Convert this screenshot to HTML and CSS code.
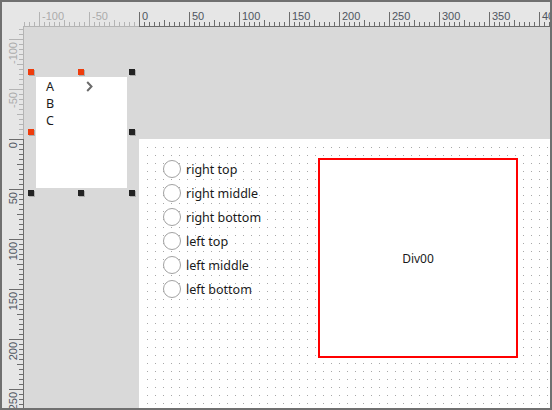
FILE: index.html
```html
<!DOCTYPE html>
<html lang="en">
<head>
  <meta charset="UTF-8" />
  <meta name="viewport" content="width=device-width, initial-scale=1.0" />
  <title>Layout Designer</title>
  <link rel="stylesheet" href="styles.css">
</head>
<body>

  <div class="frame">
    <div class="ruler ruler-top">
      <svg id="ruler-top" width="548" height="25"></svg>
    </div>
    <div class="ruler ruler-left">
      <svg id="ruler-left" width="22" height="381"></svg>
    </div>

    <div class="stage">
      <div class="picker">
        <span class="handle hot h-tl"></span>
        <span class="handle hot h-tm"></span>
        <span class="handle h-tr"></span>
        <span class="handle hot h-ml"></span>
        <span class="handle h-mr"></span>
        <span class="handle h-bl"></span>
        <span class="handle h-bm"></span>
        <span class="handle h-br"></span>
        <div class="picker-panel">
          <ul class="picker-list">
            <li>A</li>
            <li>B</li>
            <li>C</li>
          </ul>
          <svg class="chevron" width="7" height="11" viewBox="0 0 7 11">
            <polyline points="1.2,1 5.5,5.5 1.2,10" fill="none" stroke="#6b6b6b" stroke-width="2" />
          </svg>
        </div>
      </div>

      <div class="canvas">
        <div class="radio-list">
          <label class="radio"><span class="radio-dot"></span>right top</label>
          <label class="radio"><span class="radio-dot"></span>right middle</label>
          <label class="radio"><span class="radio-dot"></span>right bottom</label>
          <label class="radio"><span class="radio-dot"></span>left top</label>
          <label class="radio"><span class="radio-dot"></span>left middle</label>
          <label class="radio"><span class="radio-dot"></span>left bottom</label>
        </div>
        <div class="div-box">Div00</div>
      </div>
    </div>
  </div>

  <script>
    document.addEventListener("DOMContentLoaded", function () {
      // top ruler: page x 139 is zero
      const top = document.getElementById('ruler-top');
      const ox = 137;
      let out = '';
      out += `<line class="base light" x1="21" y1="24.5" x2="${ox}" y2="24.5"/>`;
      out += `<line class="base" x1="${ox}" y1="24.5" x2="548" y2="24.5"/>`;
      for (let v = -115; v <= 410; v += 5) {
        const x = ox + v;
        if (x < 21 || x > 548) continue;
        const len = v % 50 === 0 ? 14 : (v % 25 === 0 ? 6 : 4);
        const cls = v < 0 ? 'tick light' : 'tick';
        out += `<line class="${cls}" x1="${x + 0.5}" y1="${24 - len}" x2="${x + 0.5}" y2="24"/>`;
        if (v % 50 === 0) {
          out += `<text class="${v < 0 ? 'label light' : 'label'}" x="${x + 3}" y="18">${v}</text>`;
        }
      }
      top.innerHTML = out;

      // left ruler: page y 139 is zero
      const left = document.getElementById('ruler-left');
      const oy = 112;
      out = '';
      out += `<line class="base light" x1="21.5" y1="0" x2="21.5" y2="${oy}"/>`;
      out += `<line class="base" x1="21.5" y1="${oy}" x2="21.5" y2="381"/>`;
      for (let v = -110; v <= 270; v += 5) {
        const y = oy + v;
        if (y < 0 || y > 381) continue;
        const len = v % 50 === 0 ? 14 : (v % 25 === 0 ? 6 : 4);
        const cls = v < 0 ? 'tick light' : 'tick';
        out += `<line class="${cls}" x1="${21 - len}" y1="${y + 0.5}" x2="21" y2="${y + 0.5}"/>`;
        if (v % 50 === 0) {
          const ty = y + 3;
          out += `<text class="${v < 0 ? 'label light' : 'label'}" x="15" y="${ty}" text-anchor="end" transform="rotate(-90 15 ${ty})">${v}</text>`;
        }
      }
      left.innerHTML = out;
    });
  </script>

</body>
</html>
```

FILE: styles.css
```css
body {
  margin: 0;
  padding: 0;
  font-family: 'Noto Sans', sans-serif;
  background: #fff;
}

.frame {
  width: 552px;
  height: 410px;
  box-sizing: border-box;
  border: 2px solid #707070;
  display: grid;
  grid-template-columns: 22px 1fr;
  grid-template-rows: 25px 1fr;
  background: #e6e6e6;
  overflow: hidden;
}

.ruler svg {
  display: block;
}

.ruler-top {
  grid-column: 1 / 3;
  grid-row: 1;
}

.ruler-left {
  grid-column: 1;
  grid-row: 2;
}

.ruler .tick,
.ruler .base {
  stroke: #6c6c6c;
  stroke-width: 1;
  shape-rendering: crispEdges;
}

.ruler .tick.light,
.ruler .base.light {
  stroke: #b4b4b4;
}

.ruler .label {
  font-family: 'Liberation Sans', sans-serif;
  font-size: 11px;
  fill: #4f5560;
}

.ruler .label.light {
  fill: #ababab;
}

.stage {
  grid-column: 2;
  grid-row: 2;
  position: relative;
  overflow: hidden;
  background: #d9d9d9;
  display: flex;
}

/* the list component sitting on the grey area */
.picker {
  position: absolute;
  left: 4px;
  top: 42px;
  width: 107px;
  height: 127px;
}

.picker-panel {
  position: absolute;
  left: 8px;
  top: 8px;
  width: 91px;
  height: 111px;
  background: #fff;
}

.picker-list {
  list-style: none;
  margin: 0;
  padding: 1px 0 0 10px;
  font-size: 12.5px;
  line-height: 17px;
  color: #1a1a1a;
}

.chevron {
  position: absolute;
  left: 50px;
  top: 4px;
}

.handle {
  position: absolute;
  width: 6px;
  height: 6px;
  background: #222;
  box-shadow: 1px 1px 0 rgba(0, 0, 0, 0.2);
}

.handle.hot {
  background: #ee3c0c;
}

.h-tl { left: 0; top: 0; }
.h-tm { left: 50px; top: 0; }
.h-tr { left: 101px; top: 0; }
.h-ml { left: 0; top: 60px; }
.h-mr { left: 101px; top: 60px; }
.h-bl { left: 0; top: 121px; }
.h-bm { left: 50px; top: 121px; }
.h-br { left: 101px; top: 121px; }

.canvas {
  flex: 1;
  margin: 112px 0 0 115px;
  padding: 18px 0 0 24px;
  display: flex;
  align-items: flex-start;
  background-color: #fff;
  background-image:
    linear-gradient(#fff, #fff),
    linear-gradient(#fff, #fff),
    conic-gradient(from 0deg at 1px 1px, transparent 270deg, #a8a8a8 270deg);
  background-size: 100% 1px, 1px 100%, 8px 8px;
  background-repeat: no-repeat, no-repeat, repeat;
  background-position: 0 0, 0 0, 0 0;
}

.radio-list {
  width: 155px;
  display: flex;
  flex-direction: column;
}

.radio {
  height: 24px;
  display: flex;
  align-items: center;
  gap: 5px;
  font-size: 12.5px;
  color: #1a1a1a;
}

.radio-dot {
  width: 18px;
  height: 18px;
  box-sizing: border-box;
  border: 1px solid #a2a2a2;
  border-radius: 50%;
  background: #fff;
}

.div-box {
  width: 200px;
  height: 200px;
  margin-top: 1px;
  box-sizing: border-box;
  border: 2px solid #ff0000;
  background: #fff;
  display: flex;
  align-items: center;
  justify-content: center;
  font-size: 12px;
  color: #1a1a1a;
}
```
